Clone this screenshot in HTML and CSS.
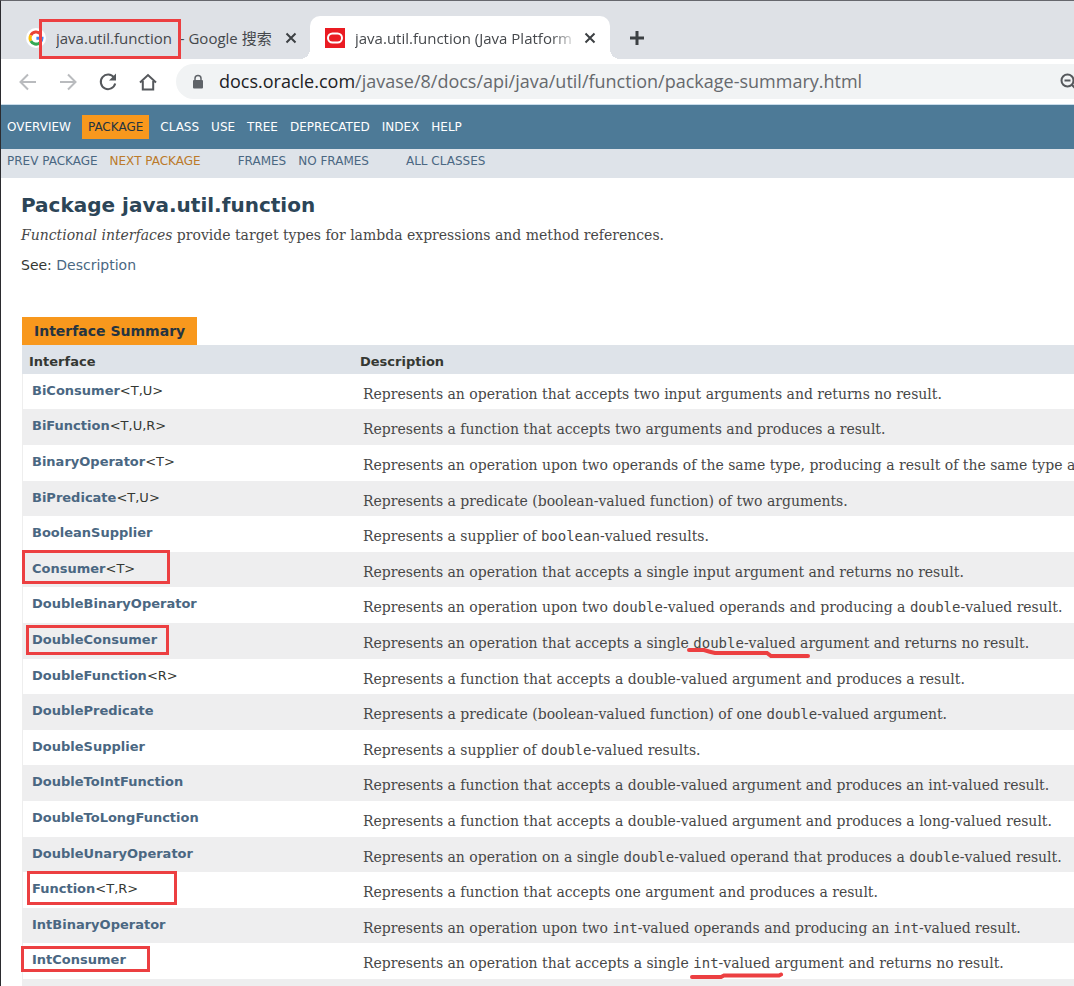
FILE: index.html
```html
<!DOCTYPE html>
<html lang="en">
<head>
<meta charset="utf-8">
<title>java.util.function (Java Platform SE 8)</title>
<link rel="stylesheet" href="styles.css">
</head>
<body>
<div class="window">
  <header class="browser">
    <div class="tabs">
      <div class="tab">
        <svg class="favicon" viewBox="0 0 20 20" aria-hidden="true"><circle cx="10" cy="10" r="10" fill="#fff"/><g fill="none" stroke-width="3"><path d="M14.6 6A6 6 0 0 0 4.8 7.2" stroke="#ea4335"/><path d="M4.8 7.2a6 6 0 0 0 0 5.8" stroke="#fbbc05"/><path d="M4.8 13a6 6 0 0 0 9 1.8" stroke="#34a853"/><path d="M13.8 14.8A6 6 0 0 0 16 10.3H10.4" stroke="#4285f4"/></g></svg>
        <span class="tab-title">java.util.function&nbsp; - Google 搜索</span>
        <button class="icon-button close" aria-label="Close tab"><svg viewBox="0 0 12 12"><path d="M1.5 1.5l9 9M10.5 1.5l-9 9"/></svg></button>
      </div>
      <div class="tab active">
        <svg class="favicon" viewBox="0 0 20 20" aria-hidden="true"><path d="M0 0h20v20H0z" fill="#ea1b22"/><rect x="3" y="5.5" width="14" height="9" rx="4.5" fill="none" stroke="#fff" stroke-width="2"/></svg>
        <span class="tab-title fade">java.util.function (Java Platform</span>
        <button class="icon-button close" aria-label="Close tab"><svg viewBox="0 0 12 12"><path d="M1.5 1.5l9 9M10.5 1.5l-9 9"/></svg></button>
      </div>
      <button class="icon-button add" aria-label="New tab"><svg viewBox="0 0 16 16"><path d="M8 1v14M1 8h14"/></svg></button>
    </div>
    <div class="toolbar">
      <button class="icon-button dim" aria-label="Back"><svg viewBox="0 0 20 20"><path d="M18 10H3M10 2.5L2.500 10l7.500 7.500"/></svg></button>
      <button class="icon-button dim" aria-label="Forward"><svg viewBox="0 0 20 20"><path d="M2 10h15M10 2.500l7.500 7.500-7.500 7.500"/></svg></button>
      <button class="icon-button" aria-label="Reload"><svg viewBox="0 0 20 20"><path d="M16 5.500A7.300 7.300 0 1 0 17.200 11.500"/><path d="M18 1.500v7h-7z" fill="#55585c" stroke="none"/></svg></button>
      <button class="icon-button" aria-label="Home"><svg viewBox="0 0 20 20"><path d="M2 10.500L10 3l8 7.500M4.800 9v8.500h10.400V9"/></svg></button>
      <div class="address">
        <svg class="lock" viewBox="0 0 12 16" aria-hidden="true"><rect x="1" y="6" width="10" height="8.500" rx="1" fill="#5f6368"/><path d="M3 6.500V4.500a3 3 0 0 1 6 0v2" fill="none" stroke="#5f6368" stroke-width="1.500"/></svg>
        <span class="url"><span class="host">docs.oracle.com</span>/javase/8/docs/api/java/util/function/package-summary.html</span>
        <button class="icon-button zoom" aria-label="Zoom"><svg viewBox="0 0 20 20"><circle cx="8.500" cy="8.500" r="6"/><path d="M5.500 8.500h6M13 13l5 5"/></svg></button>
      </div>
    </div>
  </header>
  <nav class="top-nav">
    <a href="#">OVERVIEW</a><span class="current">PACKAGE</span><a href="#">CLASS</a><a href="#">USE</a><a href="#">TREE</a><a href="#">DEPRECATED</a><a href="#">INDEX</a><a href="#">HELP</a>
  </nav>
  <nav class="sub-nav">
    <div class="links"><a href="#">PREV PACKAGE</a><a href="#" class="hover">NEXT PACKAGE</a></div>
    <div class="links"><a href="#">FRAMES</a><a href="#">NO FRAMES</a></div>
    <div class="links"><a href="#">ALL CLASSES</a></div>
  </nav>
  <main>
    <h1>Package java.util.function</h1>
    <p class="lead"><i>Functional interfaces</i> provide target types for lambda expressions and method references.</p>
    <p class="see">See: <a href="#">Description</a></p>
    <table>
      <caption><span>Interface Summary</span></caption>
      <thead><tr><th>Interface</th><th>Description</th></tr></thead>
      <tbody>
        <tr><td><a href="#">BiConsumer</a>&lt;T,U&gt;</td><td>Represents an operation that accepts two input arguments and returns no result.</td></tr>
        <tr><td><a href="#">BiFunction</a>&lt;T,U,R&gt;</td><td>Represents a function that accepts two arguments and produces a result.</td></tr>
        <tr><td><a href="#">BinaryOperator</a>&lt;T&gt;</td><td>Represents an operation upon two operands of the same type, producing a result of the same type a</td></tr>
        <tr><td><a href="#">BiPredicate</a>&lt;T,U&gt;</td><td>Represents a predicate (boolean-valued function) of two arguments.</td></tr>
        <tr><td><a href="#">BooleanSupplier</a></td><td>Represents a supplier of <code>boolean</code>-valued results.</td></tr>
        <tr><td><a href="#">Consumer</a>&lt;T&gt;</td><td>Represents an operation that accepts a single input argument and returns no result.</td></tr>
        <tr><td><a href="#">DoubleBinaryOperator</a></td><td>Represents an operation upon two <code>double</code>-valued operands and producing a <code>double</code>-valued result.</td></tr>
        <tr><td><a href="#">DoubleConsumer</a></td><td>Represents an operation that accepts a single <code>double</code>-valued argument and returns no result.</td></tr>
        <tr><td><a href="#">DoubleFunction</a>&lt;R&gt;</td><td>Represents a function that accepts a double-valued argument and produces a result.</td></tr>
        <tr><td><a href="#">DoublePredicate</a></td><td>Represents a predicate (boolean-valued function) of one <code>double</code>-valued argument.</td></tr>
        <tr><td><a href="#">DoubleSupplier</a></td><td>Represents a supplier of <code>double</code>-valued results.</td></tr>
        <tr><td><a href="#">DoubleToIntFunction</a></td><td>Represents a function that accepts a double-valued argument and produces an int-valued result.</td></tr>
        <tr><td><a href="#">DoubleToLongFunction</a></td><td>Represents a function that accepts a double-valued argument and produces a long-valued result.</td></tr>
        <tr><td><a href="#">DoubleUnaryOperator</a></td><td>Represents an operation on a single <code>double</code>-valued operand that produces a <code>double</code>-valued result.</td></tr>
        <tr><td><a href="#">Function</a>&lt;T,R&gt;</td><td>Represents a function that accepts one argument and produces a result.</td></tr>
        <tr><td><a href="#">IntBinaryOperator</a></td><td>Represents an operation upon two <code>int</code>-valued operands and producing an <code>int</code>-valued result.</td></tr>
        <tr><td><a href="#">IntConsumer</a></td><td>Represents an operation that accepts a single <code>int</code>-valued argument and returns no result.</td></tr>
      </tbody>
    </table>
    <div class="more"></div>
  </main>
  <svg class="markup" width="1074" height="986" viewBox="0 0 1074 986" aria-hidden="true">
    <rect x="40.500" y="20.500" width="139" height="37"/>
    <rect x="23.500" y="551.500" width="145" height="31"/>
    <rect x="27.500" y="626.500" width="140" height="27"/>
    <rect x="28.500" y="872.500" width="147" height="31"/>
    <rect x="22.500" y="947.500" width="126" height="23"/>
    <path d="M689 650h15q6 2 11 3h52l4 3h37" stroke-width="4"/>
    <path d="M692 977h29l3-1.500h55l2-1" stroke-width="4"/>
  </svg>
</div>
</body>
</html>
```
FILE: styles.css
```css
* { box-sizing: border-box; }
body { margin: 0; font: 14px/20px "DejaVu Sans", sans-serif; color: #353833; background: #fff; }
a { color: #4a6782; text-decoration: none; }
.window { position: relative; display: flex; flex-direction: column; height: 100vh; overflow: hidden; border-top: 1px solid #66676d; border-left: 1px solid #2b2b2f; }
.browser { font-family: "Open Sans", "Noto Sans CJK SC", sans-serif; border-bottom: 1px solid #c9dcea; }
.tabs { display: flex; align-items: flex-end; height: 58px; padding-left: 9px; background: #dee1e6; }
.tab { display: flex; align-items: center; width: 300px; height: 43px; padding: 0 13px 0 16px; color: #45484c; }
.tab.active { position: relative; background: #fff; border-radius: 10px 10px 0 0; padding: 0 14px 0 15px; }
.tab.active::before, .tab.active::after { content: ""; position: absolute; bottom: 0; width: 10px; height: 10px; }
.tab.active::before { left: -10px; background: radial-gradient(circle at 0 0, #dee1e6 10px, #fff 10px); }
.tab.active::after { right: -10px; background: radial-gradient(circle at 100% 0, #dee1e6 10px, #fff 10px); }
.favicon { flex: none; width: 20px; height: 20px; margin-right: 10px; }
.tab-title { flex: 1; font-size: 15px; white-space: nowrap; overflow: hidden; }
.fade { -webkit-mask-image: linear-gradient(90deg, #000 88%, transparent); mask-image: linear-gradient(90deg, #000 88%, transparent); }
.icon-button { flex: none; display: block; width: 20px; height: 20px; padding: 0; border: 0; background: none; }
.icon-button svg { display: block; width: 100%; height: 100%; fill: none; stroke: #55585c; stroke-width: 2; }
.icon-button.dim svg { stroke: #b9bbbe; }
.close { width: 12px; height: 12px; margin-left: 6px; }
.add { width: 16px; height: 16px; margin: 0 0 13px 19px; }
.icon-button.close svg, .icon-button.add svg { stroke: #3c4043; }
.icon-button.add svg { stroke-width: 3; }
.toolbar { display: flex; align-items: center; gap: 20px; height: 45px; padding-left: 17px; }
.address { flex: 1; display: flex; align-items: center; height: 35px; margin-left: -2px; padding-left: 16px; background: #f1f3f4; border-radius: 18px 0 0 18px; overflow: hidden; }
.lock { flex: none; width: 12px; height: 16px; margin-right: 15px; }
.url { flex: 1; font-size: 18px; line-height: 24px; padding-bottom: 2px; color: #66696d; white-space: nowrap; }
.host { color: #202124; }
.zoom { margin-right: -5px; }
.top-nav { display: flex; align-items: center; gap: 12px; height: 44px; padding-left: 6px; background: #4d7a97; font-size: 12px; }
.top-nav a { color: #fff; }
.current { margin: 0 -1px; padding: 2px 6px; background: #f8981d; color: #253441; }
.sub-nav { display: flex; gap: 37px; height: 29px; padding: 2px 0 0 6px; background: #dee3e9; font-size: 12px; }
.links { display: flex; gap: 12px; }
.links .hover { color: #bb7a2a; }
main { flex: 1; display: flex; flex-direction: column; padding-left: 20px; }
h1 { margin: 16px 0 0; font-size: 20px; line-height: 22px; color: #2c4557; }
p { margin: 10px 0 0; }
.lead { margin-top: 9px; font-family: "DejaVu Serif", serif; color: #474747; }
table { width: 100%; margin: 42px 0 0 1px; border-collapse: separate; border-spacing: 0; table-layout: fixed; }
caption { height: 28px; text-align: left; font-weight: bold; }
caption span { display: block; width: max-content; padding: 4px 12px; background: #f8981d; color: #253441; }
th { height: 29px; padding: 4px 7px 0; text-align: left; font-size: 13px; background: #dee3e9; }
th:first-child { width: 331px; }
td { height: 36px; padding: 7px 10px 0; vertical-align: top; font-size: 13px; white-space: nowrap; }
tr:nth-child(5n+1) td, tr:nth-child(5n+4) td { height: 35px; }
td:first-child { border-left: 1px solid #eee; padding-left: 9px; }
td:last-child { padding: 10px 0 0 10px; font: 14px/20px "DejaVu Serif", serif; color: #474747; }
td a { font-weight: bold; }
tbody tr:nth-child(even) { background: #eeeeef; }
code { font: 14px/16px "DejaVu Sans Mono", monospace; }
.more { flex: 1; margin-left: 1px; background: #eeeeef; }
.markup { position: absolute; left: -1px; top: -1px; pointer-events: none; fill: none; stroke: #ec3f41; stroke-width: 3; stroke-linecap: round; }
```
